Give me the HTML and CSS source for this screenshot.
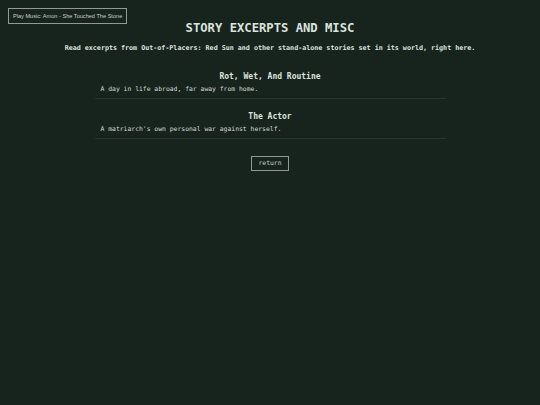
FILE: index.html
```html
<!DOCTYPE html>
<html lang="en">
<head>
<meta charset="utf-8">
<title>Story Excerpts and Misc</title>
<link rel="stylesheet" href="styles.css">
</head>
<body>
  <button class="music-toggle">Play Music: Amon - She Touched The Stone</button>
  <main class="page">
    <h1 class="page-title">STORY EXCERPTS AND MISC</h1>
    <p class="page-intro">Read excerpts from Out-of-Placers: Red Sun and other stand-alone stories set in its world, right here.</p>
    <ul class="story-list">
      <li class="story">
        <h2 class="story-title">Rot, Wet, And Routine</h2>
        <p class="story-desc">A day in life abroad, far away from home.</p>
      </li>
      <li class="story">
        <h2 class="story-title">The Actor</h2>
        <p class="story-desc">A matriarch's own personal war against herself.</p>
      </li>
    </ul>
    <div class="actions">
      <a class="return-btn" href="#">return</a>
    </div>
  </main>
</body>
</html>
```

FILE: styles.css
```css
html, body {
  margin: 0;
  padding: 0;
}

body {
  background: #17241d;
  color: #dde2dd;
  font-family: "DejaVu Sans Mono", monospace;
  min-height: 405px;
}

/* floating music player toggle */
.music-toggle {
  position: absolute;
  top: 8px;
  left: 8px;
  margin: 0;
  padding: 0 4px;
  height: 16px;
  background: transparent;
  border: 1px solid #8e9b92;
  color: #c9d0ca;
  font-family: "Liberation Sans", Arial, sans-serif;
  font-size: 5.6px;
  line-height: 14px;
}

.page {
  text-align: center;
  padding-top: 21px;
}

.page-title {
  margin: 0;
  font-size: 12.2px;
  line-height: 14px;
  font-weight: bold;
}

.page-intro {
  margin: 9px 0 0;
  font-size: 6.7px;
  line-height: 8px;
  font-weight: bold;
}

.story-list {
  list-style: none;
  width: 351px;
  margin: 20px auto 0;
  padding: 0;
}

.story {
  border-bottom: 1px solid #26332b;
  padding: 0 0 5px;
  margin-bottom: 13px;
}

.story-title {
  margin: 0;
  font-size: 8px;
  line-height: 10px;
  font-weight: bold;
}

.story-desc {
  margin: 3px 0 0;
  padding-left: 6px;
  text-align: left;
  font-size: 6.4px;
  line-height: 8px;
  color: #d3d8d3;
}

.actions {
  display: flex;
  justify-content: center;
  margin-top: 17px;
}

.return-btn {
  display: block;
  border: 1px solid #8e9b92;
  padding: 0 6px;
  height: 13px;
  line-height: 13px;
  font-size: 6.4px;
  color: #c9d0ca;
  text-decoration: none;
}
```
